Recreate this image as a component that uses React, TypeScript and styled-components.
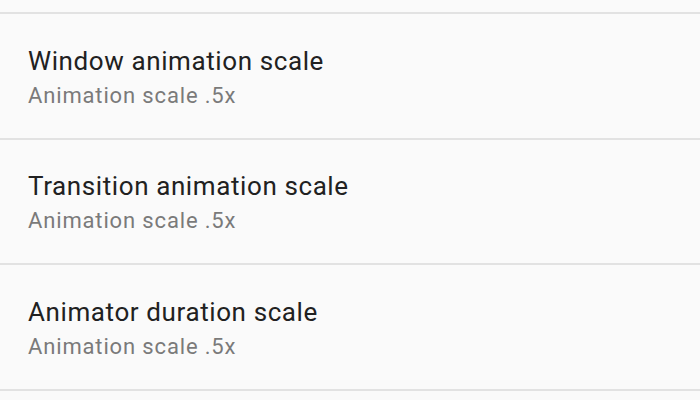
import React, { FC } from 'react';
import styled, { createGlobalStyle } from 'styled-components';

const GlobalStyle = createGlobalStyle`
  html, body {
    margin: 0;
    padding: 0;
    background: #fafafa;
    font-family: Roboto, "Noto Sans", sans-serif;
    overflow: hidden;
  }
`;

const List = styled.div`
  display: flex;
  flex-direction: column;
  width: 700px;
  height: 400px;
  background: #fafafa;
`;

const Cut = styled.div`
  height: 12px;
  border-bottom: 2px solid #e2e2e2;
  flex-shrink: 0;
`;

const Row = styled.div`
  display: flex;
  flex-direction: column;
  justify-content: center;
  height: 125.5px;
  padding: 3px 28px 0;
  border-bottom: 2px solid #e2e2e2;
  flex-shrink: 0;
  box-sizing: border-box;
`;

const Title = styled.div`
  font-size: 26px;
  line-height: 32px;
  letter-spacing: 0.6px;
  color: #212121;
`;

const Summary = styled.div`
  margin-top: 5px;
  font-size: 22px;
  line-height: 28px;
  letter-spacing: 0.85px;
  color: #7a7a7a;
`;

const items = [
  { title: 'Window animation scale', summary: 'Animation scale .5x' },
  { title: 'Transition animation scale', summary: 'Animation scale .5x' },
  { title: 'Animator duration scale', summary: 'Animation scale .5x' },
];

const App: FC = () => {
  return (
    <>
      <GlobalStyle />
      <List>
        <Cut />
        {items.map((item) => (
          <Row key={item.title}>
            <Title>{item.title}</Title>
            <Summary>{item.summary}</Summary>
          </Row>
        ))}
      </List>
    </>
  );
};

export default App;
